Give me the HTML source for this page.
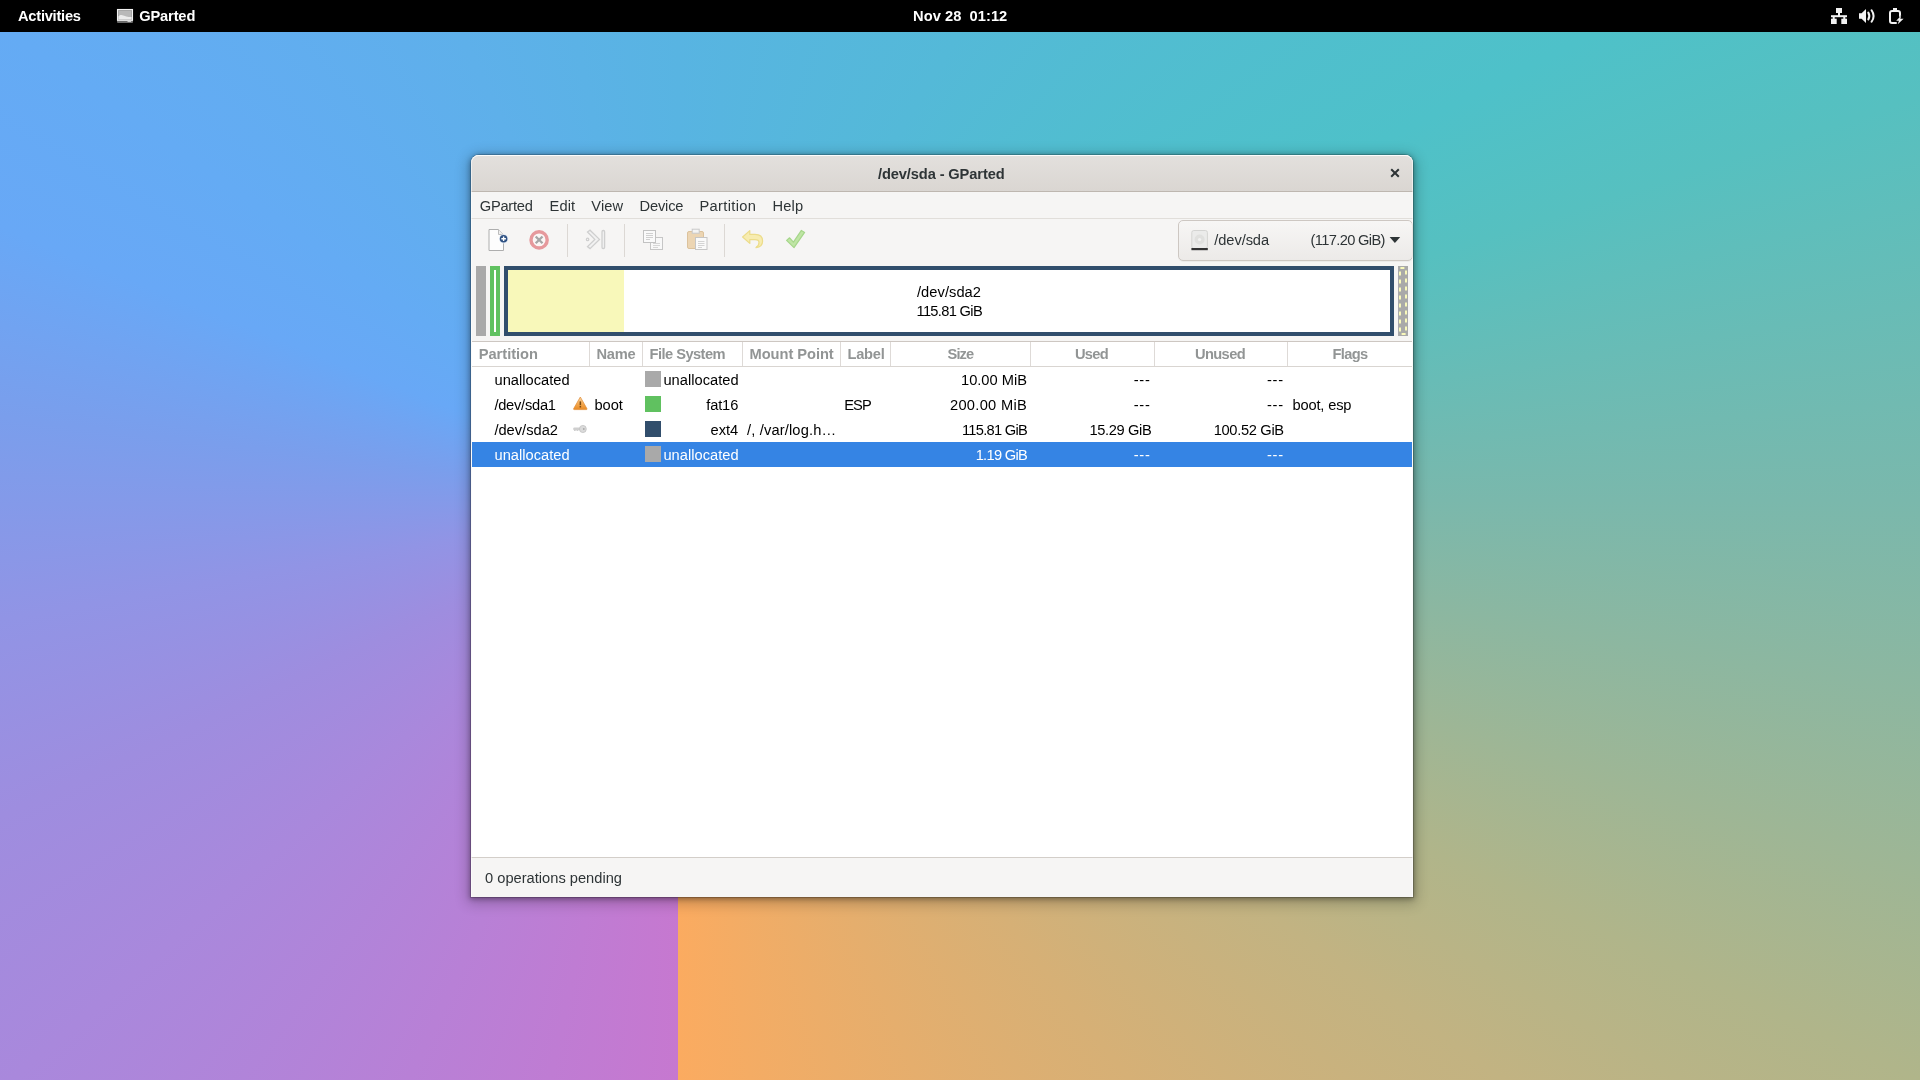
<!DOCTYPE html>
<html lang="en">
<head>
<meta charset="utf-8">
<title>/dev/sda - GParted</title>
<style>
html,body{margin:0;padding:0;}
body{width:1920px;height:1080px;overflow:hidden;position:relative;font-family:"Liberation Sans","DejaVu Sans",sans-serif;font-size:14.67px;color:#2e3436;
background:conic-gradient(from 180deg at 678px 500px,
 #c678d0 0deg,
 #b880d6 25deg,
 #a988dc 49deg,
 #9e8ddf 65deg,
 #9194e5 80deg,
 #7a9eec 97deg,
 #68a8f6 112deg,
 #64abf4 125deg,
 #5eb0ea 155deg,
 #58b4e2 180deg,
 #54b9d8 211deg,
 #4ec1c9 243deg,
 #56c0c0 252deg,
 #7ab8ac 270deg,
 #b0b58a 295deg,
 #c2b382 305deg,
 #d6b076 322deg,
 #fbab60 360deg);}
div,span,svg{position:absolute;}
#txt{left:0;top:0;width:1920px;height:1080px;will-change:transform;}
.t{white-space:pre;line-height:20px;height:20px;}
#topbar{left:0;top:0;width:1920px;height:32px;background:#000;}
#shadow{left:471px;top:155px;width:942px;height:742px;border-radius:8px 8px 0 0;
 box-shadow:0 0 0 1px rgba(0,0,0,0.17),0 1px 5px 1px rgba(0,0,0,0.3),0 3px 14px 3px rgba(0,0,0,0.24);}
#win{left:471px;top:155px;width:942px;height:742px;background:#f6f5f4;border-radius:8px 8px 0 0;overflow:hidden;}
#title{left:0;top:0;width:942px;height:36px;background:linear-gradient(#e3e0dd,#dad6d2);border-bottom:1px solid #beb7b0;box-shadow:inset 0 1px #f4f3f1;}
#menuline{left:0;top:63px;width:942px;height:1px;background:#e1deda;}
.sep{width:1px;background:#dcd8d4;top:69px;height:33px;}
#combo{left:707px;top:65px;width:233px;height:39px;border:1px solid #cdc7c2;border-radius:5px;background:linear-gradient(#f7f6f5,#eceae8);box-shadow:0 1px rgba(0,0,0,0.04);}
#tree{left:1px;top:186px;width:940px;height:515px;background:#fff;border-top:1px solid #cdc7c2;border-bottom:1px solid #cdc7c2;}
#hdrline{left:1px;top:211px;width:940px;height:1px;background:#d9d5d1;}
.cs{top:187px;width:1px;height:24px;background:#dedad7;}
#sel{left:1px;top:287px;width:940px;height:25px;background:#3584e4;}
.sq{width:16px;height:16px;left:174px;}
</style>
</head>
<body>
<div id="topbar"></div>
<!-- app icon in top bar -->
<svg style="left:116px;top:8px" width="18" height="16" viewBox="0 0 18 16">
 <rect x="1" y="1" width="16" height="14" rx="1" fill="#6a6a6a"/>
 <rect x="1.6" y="1.6" width="14.8" height="10.6" fill="none" stroke="#f2f2f2" stroke-width="1.3"/>
 <rect x="2.4" y="2.4" width="13.2" height="9" fill="#b9b9b9"/>
 <path d="M2.4 8.5 C5 5.5 7 7.5 9 8 C11 8.6 13 9.4 15.6 9 L15.6 11.4 L2.4 11.4Z" fill="#ececec"/>
 <rect x="11.5" y="12.9" width="3.6" height="1.1" fill="#cfcfcf"/>
</svg>
<!-- system icons -->
<svg style="left:1831px;top:8px" width="16" height="16" viewBox="0 0 16 16" fill="#f2f2f2">
 <rect x="5" y="0" width="6" height="5"/><rect x="7" y="5" width="2" height="3"/>
 <rect x="0" y="7.2" width="16" height="2"/>
 <rect x="1.7" y="9" width="2" height="2"/><rect x="12.3" y="9" width="2" height="2"/>
 <rect x="0" y="10.7" width="5.7" height="5.3"/><rect x="10.3" y="10.7" width="5.7" height="5.3"/>
</svg>
<svg style="left:1858px;top:8px" width="18" height="16" viewBox="0 0 18 16">
 <path d="M1 5.2 H3.6 L8 0.9 V15.1 L3.6 10.8 H1Z" fill="#f2f2f2"/>
 <path d="M10.3 4.6 Q12.4 8 10.3 11.4" fill="none" stroke="#f2f2f2" stroke-width="2" stroke-linecap="round"/>
 <path d="M13.6 2.2 Q17.6 8 13.6 13.8" fill="none" stroke="#f2f2f2" stroke-width="2" stroke-linecap="round"/>
</svg>
<svg style="left:1888px;top:8px" width="16" height="16" viewBox="0 0 16 16">
 <path d="M5 0 H9 V2 H5Z" fill="#f2f2f2"/>
 <path d="M8 15 H4 Q2 15 2 13 V5 Q2 3 4 3 H10 Q12 3 12 5 V8.5" fill="none" stroke="#f2f2f2" stroke-width="2" stroke-linecap="round"/>
 <path d="M13.2 7.6 L8.2 12.8 H11 L9.6 16.4 L15.6 10.8 H12.4 Z" fill="#f2f2f2" stroke="#000" stroke-width="0.8" paint-order="stroke"/>
</svg>

<div id="shadow"></div>
<div id="win">
 <div id="title"></div>
 <!-- close button -->
 <svg style="left:918px;top:12px" width="12" height="12" viewBox="0 0 12 12"><path d="M2.2 2.2 L9.8 9.8 M9.8 2.2 L2.2 9.8" stroke="#2e3436" stroke-width="2"/></svg>
 <div id="menuline"></div>
 <div class="sep" style="left:96px"></div><div class="sep" style="left:153px"></div><div class="sep" style="left:253px"></div>
 <!-- toolbar icons -->
 <!-- new -->
 <svg style="left:14px;top:72px" width="26" height="26" viewBox="0 0 26 26">
  <path d="M4 2.5 H13.5 L18.5 7.5 V23.5 H4Z" fill="#fdfdfd" stroke="#aeaeae" stroke-width="1"/>
  <path d="M13.5 2.5 V7.5 H18.5" fill="#eee" stroke="#bdbdbd" stroke-width="1"/>
  <circle cx="18.6" cy="11.8" r="4.6" fill="#dfe8f3"/>
  <circle cx="18.6" cy="11.8" r="3.8" fill="#2f5182"/>
  <path d="M18.6 9.5 V14.1 M16.3 11.8 H20.9" stroke="#fff" stroke-width="1.4"/>
 </svg>
 <!-- delete -->
 <svg style="left:56px;top:72px" width="26" height="26" viewBox="0 0 26 26">
  <circle cx="12.1" cy="12.9" r="8.1" fill="#fbf6f5" stroke="#e6999c" stroke-width="3.4"/>
  <path d="M8.7 9.5 L15.5 16.3 M15.5 9.5 L8.7 16.3" stroke="#a6a6a6" stroke-width="2.3"/>
 </svg>
 <!-- resize/move -->
 <svg style="left:112px;top:72px" width="26" height="26" viewBox="0 0 26 26" fill="none" stroke="#cfcfcf" stroke-width="1.3">
  <path d="M4.5 5 L7 3.2 L16.5 12.4 L7 21.6 L4.5 19.6 L11.8 12.4Z" fill="#f1f1f1"/>
  <circle cx="4.6" cy="12.4" r="1.2"/>
  <rect x="19" y="3.5" width="2.6" height="18" rx="1.2" fill="#f1f1f1"/>
 </svg>
 <!-- copy -->
 <svg style="left:169px;top:72px" width="26" height="26" viewBox="0 0 26 26">
  <rect x="10.5" y="10.5" width="12" height="12" fill="#f8f8f8" stroke="#c6c6c6"/>
  <path d="M13 16.5 H20 M13 18.5 H20 M13 20.5 H18" stroke="#d6d6d6" stroke-width="1"/>
  <rect x="3.5" y="3.5" width="12" height="12" fill="#fafafa" stroke="#c2c2c2"/>
  <path d="M6 6.5 H13 M6 8.5 H13 M6 10.5 H13 M6 12.5 H10" stroke="#d0d0d0" stroke-width="1"/>
 </svg>
 <!-- paste -->
 <svg style="left:213px;top:72px" width="26" height="26" viewBox="0 0 26 26">
  <rect x="3.5" y="4.5" width="16" height="17" rx="1.5" fill="#ecd5b3" stroke="#dcc29c"/>
  <rect x="8.2" y="2.2" width="7" height="4" fill="#f4f4f4" stroke="#c9c9c9"/>
  <rect x="11.5" y="10.5" width="11.5" height="12" fill="#fafafa" stroke="#c6c6c6"/>
  <path d="M14 14.5 H20.5 M14 16.5 H20.5 M14 18.5 H20.5 M14 20.5 H18" stroke="#d4d4d4" stroke-width="1"/>
 </svg>
 <!-- undo -->
 <svg style="left:269px;top:72px" width="26" height="26" viewBox="0 0 26 26">
  <path d="M2.6 10 L9.8 3.6 V7.4 H15 Q22.6 7.4 22.6 14 Q22.6 20 16 20.6 Q19 18.6 19 15.4 Q19 12.6 15 12.6 H9.8 V16.4Z" fill="#f7ecb0" stroke="#ecdc8a" stroke-width="1.2" stroke-linejoin="round"/>
 </svg>
 <!-- apply -->
 <svg style="left:311px;top:72px" width="26" height="26" viewBox="0 0 26 26">
  <path d="M4.6 13.4 L7.6 10.8 L11.4 15.2 L19.4 3.4 L22.6 5.4 L12 20.6 Z" fill="#bfe5a4" stroke="#a5d68a" stroke-width="1.2" stroke-linejoin="round"/>
 </svg>
 <!-- device combo -->
 <div id="combo"></div>
 <svg style="left:719px;top:74px" width="20" height="22" viewBox="0 0 20 22">
  <rect x="1.8" y="1.5" width="15.6" height="18" rx="2" fill="#ebebea" stroke="#d4d4d2"/>
  <circle cx="9.6" cy="10.5" r="5" fill="#e0e0de"/><circle cx="9.6" cy="10.5" r="1.6" fill="#f2f2f1"/>
  <rect x="1.4" y="19" width="16.4" height="2.2" fill="#333"/>
 </svg>
 <svg style="left:918px;top:81px" width="12" height="8" viewBox="0 0 12 8"><path d="M0.6 1 H11.2 L5.9 7Z" fill="#2e3436"/></svg>

 <!-- partition graphic -->
 <div style="left:5px;top:111px;width:10px;height:70px;background:#a9a9a9"></div>
 <div style="left:19px;top:111px;width:2px;height:62px;border:4px solid #60c160;background:#fff"></div>
 <div style="left:33px;top:111px;width:882px;height:62px;border:4px solid #314e6c;background:#fff"></div>
 <div style="left:37px;top:115px;width:116px;height:62px;background:#f8f8ba"></div>
 <div style="left:927px;top:111px;width:10px;height:70px;background:#a9a9a9"></div>
 <svg style="left:927px;top:111px" width="10" height="70" viewBox="0 0 10 70"><rect x="2" y="2" width="6" height="66" fill="none" stroke="#f8f8ba" stroke-width="2" stroke-dasharray="4 4" stroke-dashoffset="7.6"/></svg>

 <!-- tree -->
 <div id="tree"></div>
 <div id="hdrline"></div>
 <div class="cs" style="left:118px"></div><div class="cs" style="left:171px"></div><div class="cs" style="left:271px"></div><div class="cs" style="left:369px"></div><div class="cs" style="left:419px"></div><div class="cs" style="left:559px"></div><div class="cs" style="left:683px"></div><div class="cs" style="left:816px"></div>
 <div id="sel"></div>
 <div class="sq" style="top:216px;background:#a9a9a9"></div>
 <div class="sq" style="top:241px;background:#60c160"></div>
 <div class="sq" style="top:266px;background:#314e6c"></div>
 <div class="sq" style="top:291px;background:#a9a9a9"></div>
 <!-- warning icon -->
 <svg style="left:101px;top:240px" width="17" height="17" viewBox="0 0 17 17">
  <defs><linearGradient id="wg" x1="0" y1="0" x2="0" y2="1"><stop offset="0" stop-color="#fbd9ab"/><stop offset="0.55" stop-color="#f4a950"/><stop offset="1" stop-color="#e88a25"/></linearGradient></defs>
  <path d="M8.3 2 L15 13.8 Q15.2 14.6 14.4 14.6 H2.2 Q1.4 14.6 1.6 13.8Z" fill="url(#wg)" stroke="#e08a30" stroke-width="0.7" stroke-linejoin="round"/>
  <rect x="7.6" y="6.4" width="1.5" height="3.8" fill="#7a4a12"/><rect x="7.6" y="11" width="1.5" height="1.5" fill="#7a4a12"/>
 </svg>
 <!-- key icon -->
 <svg style="left:101px;top:268px" width="16" height="12" viewBox="0 0 16 12">
  <rect x="1.2" y="4.4" width="8" height="2.8" rx="1.2" fill="#cfcfcf"/>
  <rect x="2" y="6.6" width="1.6" height="1.4" fill="#cfcfcf"/><rect x="4.6" y="6.6" width="1.6" height="1.4" fill="#cfcfcf"/>
  <ellipse cx="10.9" cy="6" rx="3.4" ry="3.6" fill="#dadada" stroke="#c2c2c2" stroke-width="0.8"/>
  <circle cx="11.8" cy="6" r="0.9" fill="#a8a8a8"/>
 </svg>
 <div style="left:0;top:702px;width:942px;height:1px;background:#d3cec9"></div>
 <div style="left:0;top:0;width:942px;height:742px;border-radius:8px 8px 0 0;box-shadow:inset 0 1px rgba(255,255,255,0.75),inset -1px 0 rgba(255,255,255,0.55),inset 1px 0 rgba(255,255,255,0.55)"></div>
</div>
<div id="txt">
<span class="t" style="left:18.00px;top:5.60px;letter-spacing:-0.247px;color:#fff;font-weight:bold;">Activities</span>
<span class="t" style="left:139.20px;top:5.60px;letter-spacing:-0.145px;color:#fff;font-weight:bold;">GParted</span>
<span class="t" style="left:913.00px;top:5.60px;letter-spacing:0.046px;color:#fff;font-weight:bold;">Nov 28&nbsp; 01:12</span>
<span class="t" style="left:878.00px;top:163.50px;letter-spacing:-0.122px;color:#2e3436;font-weight:bold;">/dev/sda - GParted</span>
<span class="t" style="left:479.80px;top:195.90px;letter-spacing:-0.256px;color:#2e3436;">GParted</span>
<span class="t" style="left:549.50px;top:195.90px;letter-spacing:0.134px;color:#2e3436;">Edit</span>
<span class="t" style="left:591.30px;top:195.90px;letter-spacing:0.121px;color:#2e3436;">View</span>
<span class="t" style="left:639.50px;top:195.90px;letter-spacing:-0.169px;color:#2e3436;">Device</span>
<span class="t" style="left:699.50px;top:195.90px;letter-spacing:0.335px;color:#2e3436;">Partition</span>
<span class="t" style="left:772.50px;top:195.90px;letter-spacing:0.161px;color:#2e3436;">Help</span>
<span class="t" style="left:1214.30px;top:230.20px;letter-spacing:-0.088px;color:#2e3436;">/dev/sda</span>
<span class="t" style="left:1310.60px;top:230.20px;letter-spacing:-0.651px;color:#2e3436;">(117.20 GiB)</span>
<span class="t" style="left:917.00px;top:281.60px;letter-spacing:0.049px;color:#000;">/dev/sda2</span>
<span class="t" style="left:916.50px;top:300.60px;letter-spacing:-0.675px;color:#000;">115.81 GiB</span>
<span class="t" style="left:478.70px;top:344.20px;letter-spacing:-0.017px;color:#929595;font-weight:bold;">Partition</span>
<span class="t" style="left:596.50px;top:344.20px;letter-spacing:-0.280px;color:#929595;font-weight:bold;">Name</span>
<span class="t" style="left:649.60px;top:344.20px;letter-spacing:-0.552px;color:#929595;font-weight:bold;">File System</span>
<span class="t" style="left:749.50px;top:344.20px;letter-spacing:-0.041px;color:#929595;font-weight:bold;">Mount Point</span>
<span class="t" style="left:847.50px;top:344.20px;letter-spacing:-0.256px;color:#929595;font-weight:bold;">Label</span>
<span class="t" style="left:947.50px;top:344.20px;letter-spacing:-0.882px;color:#929595;font-weight:bold;">Size</span>
<span class="t" style="left:1075.00px;top:344.20px;letter-spacing:-0.711px;color:#929595;font-weight:bold;">Used</span>
<span class="t" style="left:1195.00px;top:344.20px;letter-spacing:-0.625px;color:#929595;font-weight:bold;">Unused</span>
<span class="t" style="left:1332.50px;top:344.20px;letter-spacing:-0.656px;color:#929595;font-weight:bold;">Flags</span>
<span class="t" style="left:494.50px;top:369.60px;letter-spacing:0.011px;color:#000;">unallocated</span>
<span class="t" style="left:663.40px;top:369.60px;letter-spacing:0.020px;color:#000;">unallocated</span>
<span class="t" style="left:961.00px;top:369.60px;letter-spacing:0.000px;color:#000;">10.00 MiB</span>
<span class="t" style="left:1133.70px;top:369.60px;letter-spacing:0.748px;color:#000;">---</span>
<span class="t" style="left:1266.90px;top:369.60px;letter-spacing:0.748px;color:#000;">---</span>
<span class="t" style="left:494.40px;top:394.60px;letter-spacing:-0.251px;color:#000;">/dev/sda1</span>
<span class="t" style="left:594.40px;top:394.60px;letter-spacing:-0.033px;color:#000;">boot</span>
<span class="t" style="left:706.20px;top:394.60px;letter-spacing:-0.122px;color:#000;">fat16</span>
<span class="t" style="left:844.34px;top:394.60px;letter-spacing:-1.000px;color:#000;">ESP</span>
<span class="t" style="left:950.00px;top:394.60px;letter-spacing:0.286px;color:#000;">200.00 MiB</span>
<span class="t" style="left:1133.70px;top:394.60px;letter-spacing:0.748px;color:#000;">---</span>
<span class="t" style="left:1266.90px;top:394.60px;letter-spacing:0.748px;color:#000;">---</span>
<span class="t" style="left:1292.50px;top:394.60px;letter-spacing:-0.168px;color:#000;">boot, esp</span>
<span class="t" style="left:494.40px;top:419.60px;letter-spacing:0.004px;color:#000;">/dev/sda2</span>
<span class="t" style="left:710.50px;top:419.60px;letter-spacing:-0.001px;color:#000;">ext4</span>
<span class="t" style="left:747.00px;top:419.60px;letter-spacing:0.152px;color:#000;">/, /var/log.h…</span>
<span class="t" style="left:962.00px;top:419.60px;letter-spacing:-0.725px;color:#000;">115.81 GiB</span>
<span class="t" style="left:1089.50px;top:419.60px;letter-spacing:-0.376px;color:#000;">15.29 GiB</span>
<span class="t" style="left:1213.70px;top:419.60px;letter-spacing:-0.324px;color:#000;">100.52 GiB</span>
<span class="t" style="left:494.50px;top:444.60px;letter-spacing:0.011px;color:#fff;">unallocated</span>
<span class="t" style="left:663.40px;top:444.60px;letter-spacing:0.020px;color:#fff;">unallocated</span>
<span class="t" style="left:975.70px;top:444.60px;letter-spacing:-0.716px;color:#fff;">1.19 GiB</span>
<span class="t" style="left:1133.70px;top:444.60px;letter-spacing:0.748px;color:#fff;">---</span>
<span class="t" style="left:1266.90px;top:444.60px;letter-spacing:0.748px;color:#fff;">---</span>
<span class="t" style="left:485.00px;top:867.60px;letter-spacing:0.005px;color:#2e3436;">0 operations pending</span>
</div>
</body>
</html>
